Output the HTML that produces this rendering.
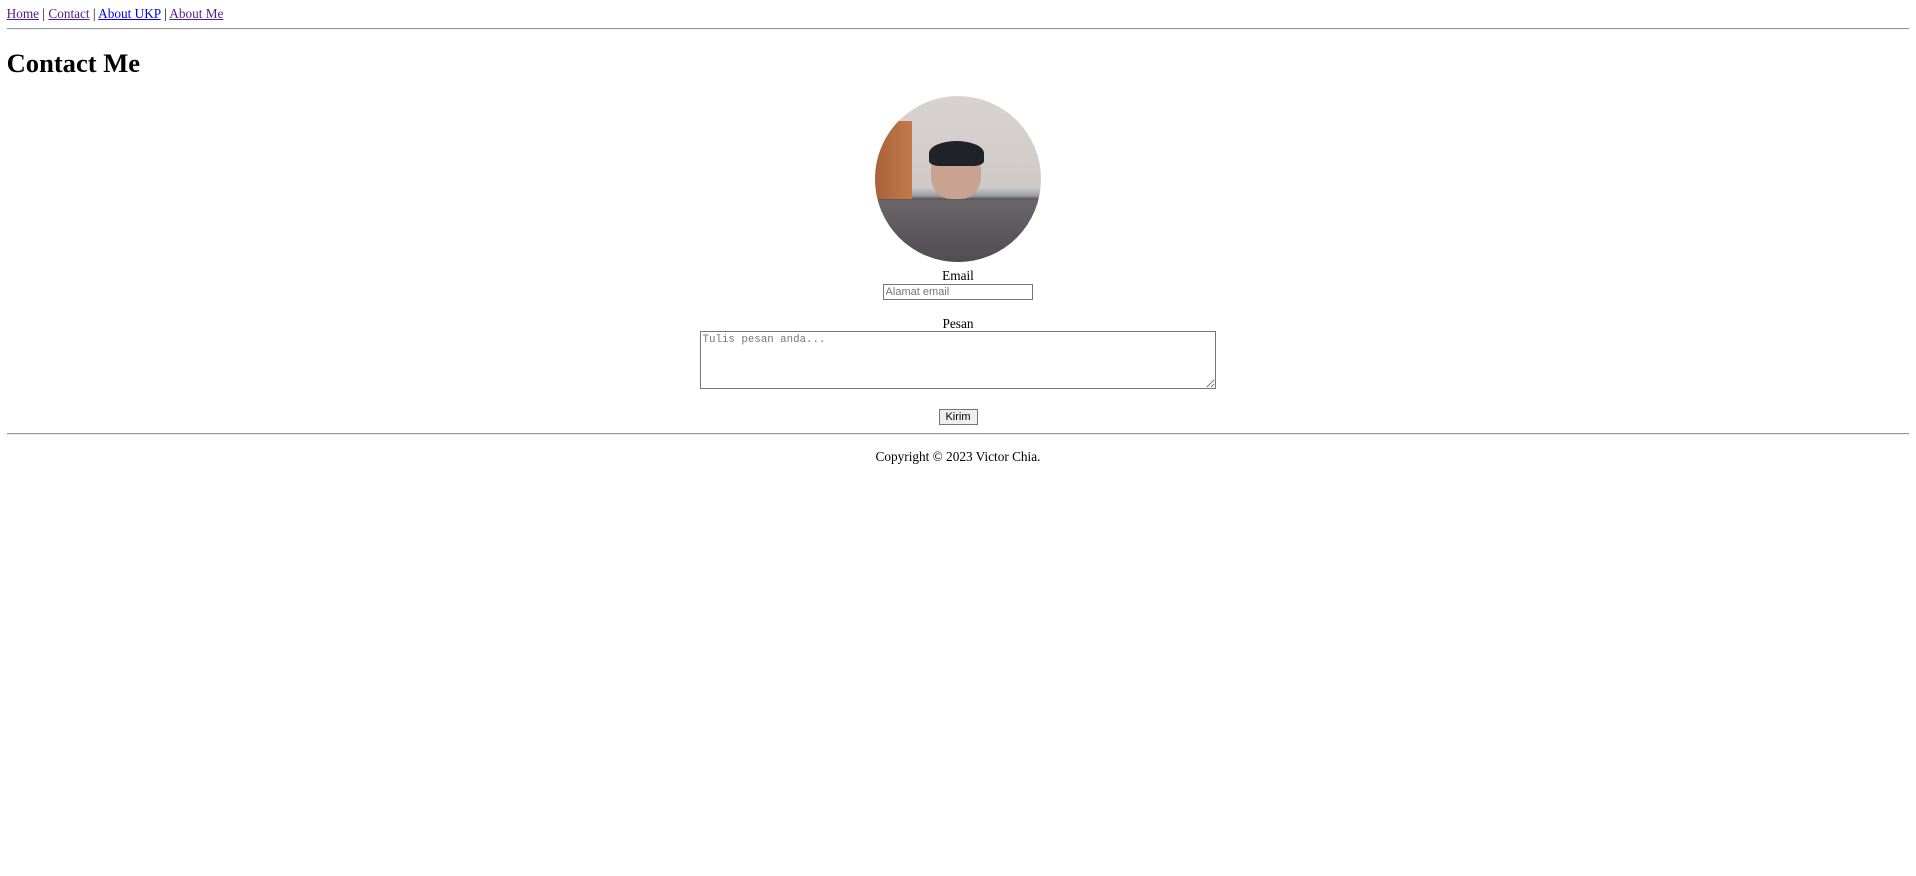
<!DOCTYPE html>
<html><head><meta charset="utf-8">
<style>
html{zoom:0.83}
body{margin:8px;font-family:"Liberation Serif",serif;font-size:16px;color:#000;background:#fff}
a{color:#0000ee}
a.v{color:#551a8b}
h1{font-size:2em;margin:21px 0;line-height:37px}
hr{border:none;border-top:1px solid #999;border-bottom:1px solid #eee;margin:0}
.c{text-align:center}
.pic{width:200px;height:200px;border-radius:50%;margin:0 auto;overflow:hidden;position:relative;
background:linear-gradient(180deg,#d8d3d2 0%,#cfcac8 55%,#9aa0a6 60%,#5f5a5e 62%,#55525a 100%)}
.pic .door{position:absolute;left:0;top:30px;width:45px;height:95px;background:linear-gradient(90deg,#a8623a,#c47a4a)}
.pic .face{position:absolute;left:68px;top:60px;width:60px;height:65px;border-radius:45% 45% 40% 40%;background:#caa291}
.pic .hair{position:absolute;left:65px;top:55px;width:66px;height:30px;border-radius:50% 50% 20% 20%;background:#1f2226}
.pic .desk{position:absolute;left:0;top:126px;width:100%;height:80px;background:linear-gradient(180deg,#6b666a,#4e4a50)}
input{box-sizing:border-box;width:181px;height:19px;font-family:"Liberation Sans",sans-serif;font-size:13.3px;border:1px solid #767676;padding:1px 2px;display:block;margin:0 auto}
textarea{box-sizing:border-box;width:622px;height:69px;font-family:"Liberation Mono",monospace;font-size:13px;border:1px solid #767676;padding:2px;display:block;margin:0 auto;resize:both}
button{box-sizing:border-box;height:19px;width:47px;font-family:"Liberation Sans",sans-serif;font-size:13.3px;padding:0;border:1px solid #767676;background:#efefef}
.lbl{line-height:18px}
</style></head><body>
<div style="line-height:18px"><a class="v" href="#">Home</a> | <a class="v" href="#">Contact</a> | <a href="#">About UKP</a> | <a class="v" href="#">About Me</a></div>
<hr style="margin:8px 0 2px">
<h1>Contact Me</h1>
<div class="c">
<div class="pic"><div class="door"></div><div class="face"></div><div class="hair"></div><div class="desk"></div></div>
<div class="lbl" style="margin-top:9px">Email</div>
<input placeholder="Alamat email">
<div class="lbl" style="margin-top:20px">Pesan</div>
<textarea placeholder="Tulis pesan anda..."></textarea>
<div style="margin-top:25px;line-height:0"><button>Kirim</button></div>
</div>
<hr style="margin-top:9px">
<p class="c" style="margin:18px 0 0;line-height:18px">Copyright © 2023 Victor Chia.</p>
</body></html>
